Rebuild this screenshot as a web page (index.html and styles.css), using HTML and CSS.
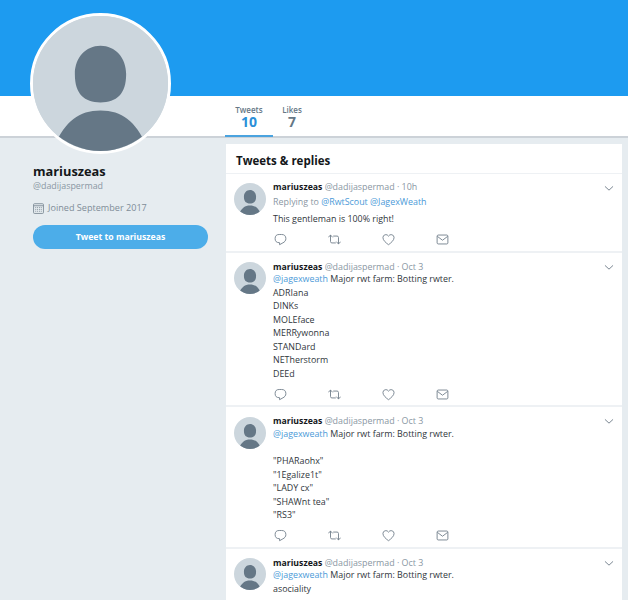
FILE: index.html
```html
<!DOCTYPE html>
<html lang="en">
<head>
<meta charset="utf-8">
<title>mariuszeas</title>
<link rel="stylesheet" href="styles.css">
</head>
<body>
<svg width="0" height="0" class="defs">
  <defs>
    <symbol id="i-reply" viewBox="0 0 14 14"><path d="M5.6 1.6h2.6a4.6 4.6 0 0 1 4.6 4.500c0 2.200-1.500 3.700-3.200 4.500L6 12.600v-2.200H5.600A4.400 4.400 0 0 1 1.200 6a4.400 4.400 0 0 1 4.400-4.400z" fill="none" stroke="currentColor" stroke-width="1" stroke-linejoin="round"/></symbol>
    <symbol id="i-rt" viewBox="0 0 14 14"><path d="M.6 4.400 2.700 2.200l2.100 2.200M2.700 2.400v6.800c0 .9.600 1.500 1.500 1.500H8M13.400 9.600l-2.100 2.200-2.100-2.200M11.300 11.600V4.800c0-.9-.6-1.500-1.500-1.500H6" fill="none" stroke="currentColor" stroke-width="1" stroke-linejoin="round" stroke-linecap="round"/></symbol>
    <symbol id="i-heart" viewBox="0 0 14 14"><path d="M7 12.600C4.600 10.900 1 8 1 5a3.200 3.200 0 0 1 6-1.600A3.200 3.200 0 0 1 13 5c0 3-3.600 5.900-6 7.600z" fill="none" stroke="currentColor" stroke-width="1" stroke-linejoin="round"/></symbol>
    <symbol id="i-dm" viewBox="0 0 14 14"><path d="M2.300 2.200h9.400c.6 0 1.100.5 1.100 1.100v7.400c0 .6-.5 1.100-1.100 1.100H2.300c-.6 0-1.100-.5-1.100-1.100V3.300c0-.6.500-1.100 1.100-1.100zM1.400 3.600 7 7.800l5.600-4.200" fill="none" stroke="currentColor" stroke-width="1" stroke-linejoin="round"/></symbol>
    <symbol id="i-chev" viewBox="0 0 12 8"><path d="M1.500 1.800 6 6l4.500-4.200" fill="none" stroke="currentColor" stroke-width="1.100" stroke-linecap="round" stroke-linejoin="round"/></symbol>
    <symbol id="i-person" viewBox="0 0 100 100"><rect width="100" height="100" fill="#ccd6dd"/><path d="M50 22C61 22 69 31 69 43 69 58 62 64 50 64 38 64 31 58 31 43 31 31 39 22 50 22zM50 70C66 70 76 78 84 96V100H16V96C24 78 34 70 50 70z" fill="#657786"/></symbol>
  </defs>
</svg>

<header class="banner"></header>

<nav class="profile-nav">
  <ul class="tabs">
    <li class="tab tab-active"><span class="tab-label">Tweets</span><span class="tab-value">10</span></li>
    <li class="tab"><span class="tab-label">Likes</span><span class="tab-value">7</span></li>
  </ul>
</nav>

<div class="big-avatar"><svg class="fill-svg"><use href="#i-person"/></svg></div>

<main class="page">
  <aside class="side">
    <h1 class="name">mariuszeas</h1>
    <div class="handle">@dadijaspermad</div>
    <div class="joined">
      <svg class="cal" viewBox="0 0 12 12"><rect x=".6" y=".8" width="10.800" height="10.600" rx="1" fill="none" stroke="currentColor"/><path d="M.6 3h10.800" stroke="currentColor"/><path d="M2.500 5h7M2.500 7h7M2.500 9h7" stroke="currentColor" stroke-dasharray="1 1"/></svg>
      <span>Joined September 2017</span>
    </div>
    <button class="tweet-to">Tweet to mariuszeas</button>
  </aside>

  <section class="timeline">
    <h2 class="timeline-title">Tweets &amp; replies</h2>

    <article class="tweet tweet-one">
      <svg class="avatar"><use href="#i-person"/></svg>
      <div class="tweet-body">
        <div class="meta"><b class="author">mariuszeas</b> <span class="muted">@dadijaspermad · 10h</span></div>
        <div class="reply-to muted">Replying to <a class="link">@RwtScout</a> <a class="link">@JagexWeath</a></div>
        <p class="text">This gentleman is 100% right!</p>
        <div class="actions">
          <svg class="act"><use href="#i-reply"/></svg><svg class="act"><use href="#i-rt"/></svg><svg class="act"><use href="#i-heart"/></svg><svg class="act"><use href="#i-dm"/></svg>
        </div>
      </div>
      <svg class="chev"><use href="#i-chev"/></svg>
    </article>

    <article class="tweet">
      <svg class="avatar"><use href="#i-person"/></svg>
      <div class="tweet-body">
        <div class="meta"><b class="author">mariuszeas</b> <span class="muted">@dadijaspermad · Oct 3</span></div>
        <p class="text"><a class="link">@jagexweath</a> Major rwt farm: Botting rwter.
ADRIana
DINKs
MOLEface
MERRywonna
STANDard
NETherstorm
DEEd</p>
        <div class="actions">
          <svg class="act"><use href="#i-reply"/></svg><svg class="act"><use href="#i-rt"/></svg><svg class="act"><use href="#i-heart"/></svg><svg class="act"><use href="#i-dm"/></svg>
        </div>
      </div>
      <svg class="chev"><use href="#i-chev"/></svg>
    </article>

    <article class="tweet">
      <svg class="avatar"><use href="#i-person"/></svg>
      <div class="tweet-body">
        <div class="meta"><b class="author">mariuszeas</b> <span class="muted">@dadijaspermad · Oct 3</span></div>
        <p class="text"><a class="link">@jagexweath</a> Major rwt farm: Botting rwter.

"PHARaohx"
"1Egalize1t"
"LADY cx"
"SHAWnt tea"
"RS3"</p>
        <div class="actions">
          <svg class="act"><use href="#i-reply"/></svg><svg class="act"><use href="#i-rt"/></svg><svg class="act"><use href="#i-heart"/></svg><svg class="act"><use href="#i-dm"/></svg>
        </div>
      </div>
      <svg class="chev"><use href="#i-chev"/></svg>
    </article>

    <article class="tweet">
      <svg class="avatar"><use href="#i-person"/></svg>
      <div class="tweet-body">
        <div class="meta"><b class="author">mariuszeas</b> <span class="muted">@dadijaspermad · Oct 3</span></div>
        <p class="text"><a class="link">@jagexweath</a> Major rwt farm: Botting rwter.
asociality</p>
        <div class="actions">
          <svg class="act"><use href="#i-reply"/></svg><svg class="act"><use href="#i-rt"/></svg><svg class="act"><use href="#i-heart"/></svg><svg class="act"><use href="#i-dm"/></svg>
        </div>
      </div>
      <svg class="chev"><use href="#i-chev"/></svg>
    </article>
  </section>
</main>
</body>
</html>
```

FILE: styles.css
```css
* { box-sizing: border-box; }
html, body { margin: 0; height: 600px; overflow: hidden; }
body {
  position: relative;
  background: #e6ecf0;
  font-family: "Open Sans", "Noto Sans", sans-serif;
  color: #14171a;
}
.defs { position: absolute; }
.banner { height: 96px; background: #1d9bf0; }
.profile-nav {
  height: 42px;
  background: #fff;
  border-bottom: 2px solid #ccd2d8;
  padding-left: 225px;
}
.tabs { display: flex; list-style: none; margin: 0; padding: 0; height: 41px; }
.tab {
  display: flex;
  flex-direction: column;
  align-items: center;
  padding-top: 8px;
  color: #657786;
}
.tab:first-child { width: 48px; }
.tab:last-child { width: 38px; }
.tab-active { border-bottom: 2px solid #4aa3df; }
.tab-label { font-size: 8px; font-weight: 600; line-height: 11px; }
.tab-value { font-size: 14px; font-weight: 700; line-height: 14px; }
.tab-active .tab-value { color: #2b8fd8; }
.big-avatar {
  position: absolute;
  left: 30px;
  top: 13px;
  width: 141px;
  height: 141px;
  border-radius: 50%;
  border: 3px solid #fff;
  overflow: hidden;
  background: #ccd6dd;
}
.fill-svg { display: block; width: 100%; height: 100%; }
.page { display: flex; padding-top: 6px; }
.side { width: 226px; padding: 19px 18px 0 33px; flex: none; }
.name { margin: 0; font-size: 12.800px; font-weight: 700; line-height: 16px; }
.handle { font-size: 8.900px; line-height: 13px; color: #8a97a3; }
.joined {
  display: flex;
  align-items: center;
  gap: 4px;
  margin-top: 9px;
  font-size: 9.100px;
  line-height: 14px;
  color: #7f8c98;
}
.cal { width: 11px; height: 11px; color: #7f8c98; flex: none; }
.tweet-to {
  display: block;
  width: 175px;
  height: 24px;
  margin-top: 10px;
  border: 0;
  padding: 0;
  border-radius: 12px;
  background: #4cade9;
  color: #fff;
  font: 700 8.700px "Open Sans", sans-serif;
}
.timeline { width: 396px; background: #fff; flex: none; height: 456px; overflow: hidden; }
.timeline-title {
  margin: 0;
  height: 30px;
  padding: 9px 10px 0;
  font-size: 11.500px;
  font-weight: 700;
  line-height: 16px;
  border-bottom: 1px solid #eef1f4;
}
.tweet {
  display: flex;
  position: relative;
  padding: 9px 13px 0 8px;
  border-bottom: 2px solid #eef1f4;
}
.tweet-one { min-height: 78.500px; padding-top: 8px; }
.avatar { width: 32px; height: 32px; border-radius: 50%; flex: none; margin: .500px 7px 0 0; }
.tweet-body { flex: 1; min-width: 0; }
.meta { font-size: 8.900px; line-height: 10px; margin-bottom: .750px; white-space: nowrap; }
.author { font-weight: 700; font-size: 8.700px; color: #14171a; }
.muted { color: #8a97a3; }
.reply-to { font-size: 8.900px; line-height: 15px; margin-top: 1.750px; }
.link { color: #4b9ad8; }
.text { margin: 0; font-size: 8.900px; line-height: 13.500px; white-space: pre-line; color: #30363c; }
.reply-to + .text { margin-top: 3px; }
.actions { display: flex; padding: 7.500px 0 0 1px; height: 25px; }
.act { width: 13px; height: 13px; color: #76838f; margin-right: 41px; flex: none; }
.chev { position: absolute; right: 8px; top: 11px; width: 10px; height: 7px; color: #6f7c88; }
```
